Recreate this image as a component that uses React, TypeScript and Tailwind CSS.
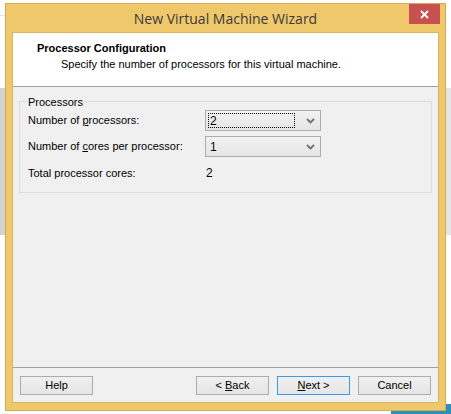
import React from 'react'

const ui = { fontFamily: '"Liberation Sans", Arial, sans-serif' }

function Chevron() {
  return (
    <svg width="9" height="6" viewBox="0 0 9 6" className="shrink-0">
      <path d="M1 1 L4.5 4.5 L8 1" fill="none" stroke="#707070" strokeWidth="1.8" />
    </svg>
  )
}

function Combo({ value, focused }: { value: string; focused?: boolean }) {
  return (
    <div className="flex h-[21px] w-[116px] items-center border border-[#acacac] bg-gradient-to-b from-[#f2f2f2] to-[#e5e5e5] pr-[5px] pl-[2px]">
      <div
        className={
          'flex h-[15px] flex-1 items-center pl-[1px] text-[12px] text-black ' +
          (focused ? 'border border-dotted border-black' : 'border border-transparent')
        }
      >
        {value}
      </div>
      <div className="ml-[11px]">
        <Chevron />
      </div>
    </div>
  )
}

function Button({ children, focused }: { children: React.ReactNode; focused?: boolean }) {
  return (
    <button
      className={
        'flex h-[19px] w-[73px] items-center justify-center bg-gradient-to-b from-[#f0f0f0] to-[#e5e5e5] text-[11px] text-black ' +
        (focused ? 'border border-[#3c99ee]' : 'border border-[#acacac]')
      }
    >
      {children}
    </button>
  )
}

export default function App() {
  return (
    <div className="relative h-[414px] w-[451px] overflow-hidden bg-white" style={ui}>
      {/* desktop behind the window */}
      <div className="absolute top-[15px] left-0 h-px w-[5px] bg-[#d6e4f5]" />
      <div className="absolute top-[88px] left-0 h-[147px] w-[5px] bg-[#d2d2d2]" />
      <div className="absolute top-[88px] right-0 h-[147px] w-[5px] bg-[#e4e4e4]" />
      <div className="absolute right-0 bottom-0 h-[10px] w-[60px] bg-[#2b8fb8]" />

      {/* wizard window */}
      <div className="absolute top-[3px] left-[5px] flex h-[408px] w-[441px] flex-col border border-[#d3aa55] bg-[#f0c86c]">
        <div className="relative flex h-[28px] items-center justify-center">
          <span
            className="text-[14px] text-[#3a3a3a]"
            style={{ fontFamily: '"Open Sans", "Noto Sans", sans-serif' }}
          >
            New Virtual Machine Wizard
          </span>
          <div className="absolute top-0 right-[5px] flex h-[20px] w-[31px] items-center justify-center bg-[#c75050]">
            <svg width="9" height="9" viewBox="0 0 9 9">
              <path d="M1 1 L8 8 M8 1 L1 8" stroke="#fff" strokeWidth="1.8" />
            </svg>
          </div>
        </div>

        <div className="mx-[6px] mb-[7px] flex flex-1 flex-col border border-[#d9b464] bg-[#f0f0f0]">
          <div className="h-[54px] border-b border-[#a0a0a0] bg-white pt-[8px] pl-[24px]">
            <div className="text-[11px] leading-[14px] font-bold text-black">Processor Configuration</div>
            <div className="mt-[2px] pl-[24px] text-[11px] leading-[14px] text-black">
              Specify the number of processors for this virtual machine.
            </div>
          </div>

          <div className="flex flex-1 flex-col">
            <div className="relative mx-[6px] mt-[14px] h-[92px] border border-[#dcdcdc] px-[8px] pt-[8px]">
              <span className="absolute top-[-7px] left-[7px] bg-[#f0f0f0] px-[1px] text-[11px] leading-[14px] text-black">
                Processors
              </span>
              <div className="grid grid-cols-[177px_auto] items-center gap-y-[5px] text-[11px] text-black">
                <span>
                  Number of <span className="underline">p</span>rocessors:
                </span>
                <Combo value="2" focused />
                <span>
                  Number of <span className="underline">c</span>ores per processor:
                </span>
                <Combo value="1" />
                <span className="pt-[2px]">Total processor cores:</span>
                <span className="pt-[2px] pl-[1px] text-[12px]">2</span>
              </div>
            </div>

            <div className="flex-1" />

            <div className="border-t border-[#a0a0a0] shadow-[inset_0_1px_0_#ffffff]" />
            <div className="flex h-[34px] items-center px-[7px]">
              <Button>Help</Button>
              <div className="flex-1" />
              <div className="flex gap-[8px]">
                <Button>
                  {'<\u00a0'}
                  <span className="underline">B</span>ack
                </Button>
                <Button focused>
                  <span className="underline">N</span>
                  {'ext\u00a0>'}
                </Button>
                <Button>Cancel</Button>
              </div>
            </div>
          </div>
        </div>
      </div>
    </div>
  )
}
